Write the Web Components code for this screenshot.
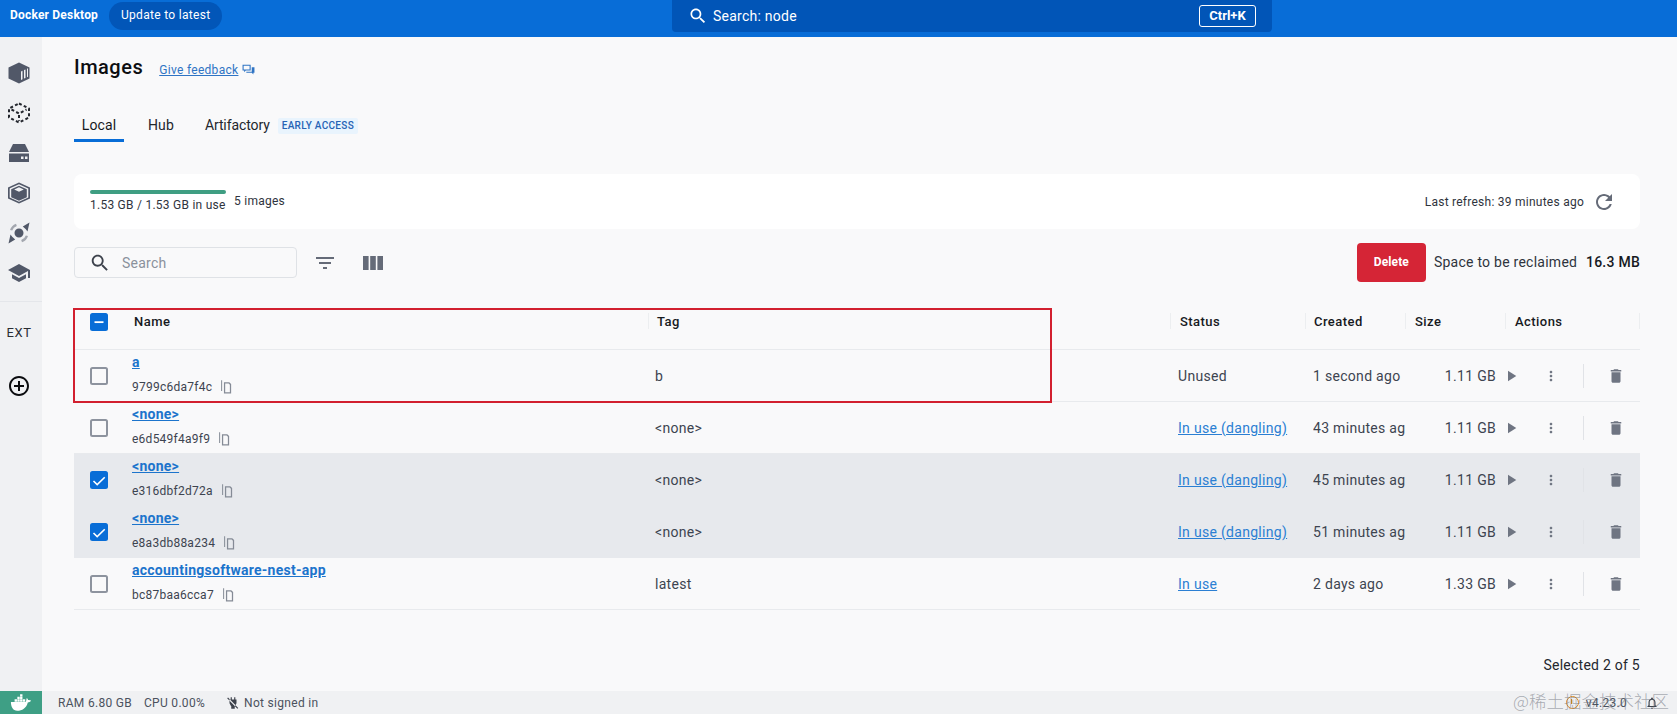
<!DOCTYPE html>
<html lang="en">
<head>
<meta charset="utf-8">
<title>Docker Desktop</title>
<style>
  html, body { margin: 0; height: 100%; }
  body {
    background: #f9f9fa;
    color: #17191e;
    font-family: Roboto, "Liberation Sans", sans-serif;
    overflow: hidden;
  }
  dd-app { height: 714px; }
</style>
</head>
<body>
<dd-app></dd-app>
<script>
const PATHS = {
  search: 'M15.5 14h-.79l-.28-.27C15.41 12.59 16 11.11 16 9.5 16 5.91 13.09 3 9.5 3S3 5.91 3 9.5 5.91 16 9.5 16c1.61 0 3.09-.59 4.23-1.57l.27.28v.79l5 4.99L20.49 19l-4.99-5zm-6 0C7.01 14 5 11.99 5 9.5S7.01 5 9.5 5 14 7.01 14 9.5 11.99 14 9.5 14z',
  filter: 'M10 18h4v-2h-4v2zM3 6v2h18V6H3zm3 7h12v-2H6v2z',
  columns: 'M2 5h5.6v14H2zM9.2 5h5.6v14H9.2zM16.4 5H22v14h-5.6z',
  refresh: 'M17.65 6.35C16.2 4.9 14.21 4 12 4c-4.42 0-7.99 3.58-7.99 8s3.57 8 7.99 8c3.73 0 6.84-2.55 7.73-6h-2.08c-.82 2.33-3.04 4-5.65 4-3.31 0-6-2.69-6-6s2.69-6 6-6c1.66 0 3.14.69 4.22 1.78L13 11h7V4l-2.35 2.35z',
  copy: 'M5 2h1.600v17H5zM9.500 5H18l3 3v15H9.500V5zm2 2v14h7.500V9l-2-2h-5.500z',
  play: 'M8 5v14l11-7z',
  more: 'M12 8c1.100 0 2-.9 2-2s-.9-2-2-2-2 .9-2 2 .9 2 2 2zm0 2c-1.100 0-2 .9-2 2s.9 2 2 2 2-.9 2-2-.9-2-2-2zm0 6c-1.100 0-2 .9-2 2s.9 2 2 2 2-.9 2-2-.9-2-2-2z',
  trash: 'M6 19c0 1.100.9 2 2 2h8c1.100 0 2-.9 2-2V7H6v12zM19 4h-3.500l-1-1h-5l-1 1H5v2h14V4z',
  school: 'M5 13.180v4L12 21l7-3.820v-4L12 17l-7-3.820zM12 3 1 9l11 6 9-4.910V17h2V9L12 3z',
  add: 'M13 7h-2v4H7v2h4v4h2v-4h4v-2h-4V7zm-1-5C6.480 2 2 6.480 2 12s4.480 10 10 10 10-4.480 10-10S17.520 2 12 2zm0 18c-4.410 0-8-3.590-8-8s3.590-8 8-8 8 3.590 8 8-3.590 8-8 8z',
  bell: 'M12 22c1.100 0 2-.9 2-2h-4c0 1.100.9 2 2 2zm6-6v-5c0-3.070-1.630-5.640-4.500-6.320V4c0-.83-.67-1.500-1.500-1.500s-1.500.67-1.500 1.500v.68C7.640 5.360 6 7.920 6 11v5l-2 2v1h16v-1l-2-2zm-2 1H8v-6c0-2.480 1.510-4.500 4-4.500s4 2.020 4 4.500v6z',
  feedback: 'M1 3h15v11H7l-3 3v-3H1zM3 5v7h11V5zM18 8h5v10h-2v3l-3-3H8v-2h10z',
  containers: 'M12 1.500 22.500 6.500v11L12 22.500 1.500 17.500v-11zM14 10.500v8.500l1.500-.7v-8.500zM17 9.100v8.500l1.500-.7V8.400zM20 7.700v8.500l1-.5V7.200z',
  volumes: 'M6 3h12l4 8H2zM2 12.500h20V21H2zM14 15.500v2.500h2.500v-2.500zM18 15.500v2.500h2.500v-2.500z',
  builds: 'M12 1.500 23 6.500v11L12 22.500 1 17.500v-11zM12 3.300 3.500 7.100 2.700 7.500v9l9.300 4.300 9.300-4.300v-9zM12 4.800 19.800 8.300v8L12 19.800 4.200 16.300v-8zM12 6.300 7.200 8.500 12 10.700l4.800-2.200z',
  devenv: 'M12 7.500a4.500 4.500 0 1 1 0 9 4.500 4.500 0 0 1 0-9zM22.500 1.500 20.500 10.500l-1.700-2.200-3-2.700zM1.500 22.500 3.500 13.500l1.700 2.200 3 2.700z',
  arcs: 'M3 9a9.500 9.500 0 0 1 6-6.300l.8 2.300A7.300 7.300 0 0 0 5.200 9.600zM21 15a9.500 9.500 0 0 1-6 6.300l-.8-2.300a7.300 7.300 0 0 0 4.600-4.600z',
  whale: 'M5 8h2.600v2.500H5zM8 8h2.600v2.500H8zM11 8h2.600v2.500H11zM8 5.200h2.600v2.400H8zM11 5.200h2.600v2.400H11zM11 2.500h2.600v2.400H11zM14 8h2.600v2.500H14zM18.300 6.500c.9.500 1.300 1.500 1.400 2.300 1-.3 2-.2 3.300.5-.9 1.700-2.300 2.100-3.600 2.100C18 17.500 13 20.500 8 20.500 3 20.500 1 16 1 11h15.800c1-.3.9-2.900 1.500-4.500z',
  plugoff: 'M8 2h2v4h4V2h2v4h2v6.500L15.500 17H15v5H9v-5h-.5L6 12.500V6h2zM3.500 2.500 21 20.500l-1.500 1.500L2 4z',
  minus: 'M6 11h12v2.400H6z',
  check: 'M9.600 16.800 5.400 12.600 3.900 14.100l5.700 5.700L20.400 9l-1.500-1.500z'
};

function icon(name, size, color) {
  return `<svg width="${size}" height="${size}" viewBox="0 0 24 24" style="display:block;flex:none" fill="${color}"><path fill-rule="evenodd" d="${PATHS[name]}"/></svg>`;
}

class DdTopbar extends HTMLElement {
  connectedCallback() {
    this.attachShadow({ mode: 'open' });
    this.shadowRoot.innerHTML = `
      <style>
        :host { display: grid; grid-template-columns: 672px 600px 1fr; height: 37px; background: #086dd7; color: #fff; }
        .left { display: flex; align-items: flex-start; }
        .logo { font-size: 12px; font-weight: 700; margin: 8px 0 0 10px; line-height: 14px; letter-spacing: .2px; width: 99px; white-space: nowrap; }
        .pill { margin-top: 2px; height: 28px; line-height: 27px; padding: 0 11.500px 0 12px; font-size: 12px; letter-spacing: .3px; background: #0256b8; border-radius: 14px; }
        .search { display: flex; align-items: center; height: 32px; background: #0155b7; border-radius: 0 0 4px 4px; padding: 0 16px; }
        .search span { margin-left: 5px; font-size: 14px; letter-spacing: .25px; }
        .key { margin-left: auto; box-sizing: border-box; width: 57px; height: 22px; line-height: 19px; border: 1px solid #fff; border-radius: 3px; text-align: center; font-size: 13px; font-weight: 700; }
      </style>
      <div class="left"><div class="logo">Docker Desktop</div><div class="pill">Update to latest</div></div>
      <div class="search">${icon('search', 20, '#fff')}<span>Search: node</span><div class="key">Ctrl+K</div></div>
    `;
  }
}

class DdSidebar extends HTMLElement {
  connectedCallback() {
    this.attachShadow({ mode: 'open' });
    const dashedCube = `<svg width="24" height="24" viewBox="0 0 24 24" style="display:block" fill="none" stroke="#23262d" stroke-width="2" stroke-dasharray="3 2.300"><path d="M12 2.500 22 7.500v9L12 21.500 2 16.500v-9zM4.500 8.500 12 12.500l7.500-4M12 14v6"/></svg>`;
    const devenv = `<svg width="24" height="24" viewBox="0 0 24 24" style="display:block"><path fill="#a3a7af" fill-rule="evenodd" d="${PATHS.arcs}"/><path fill="#515868" fill-rule="evenodd" d="${PATHS.devenv}"/></svg>`;
    const items = [
      icon('containers', 24, '#515868'),
      dashedCube,
      icon('volumes', 24, '#515868'),
      icon('builds', 24, '#515868'),
      devenv,
      icon('school', 24, '#515868')
    ];
    this.shadowRoot.innerHTML = `
      <style>
        :host { display: flex; flex-direction: column; width: 42px; flex: none; background: #f0f1f3; box-sizing: border-box; padding-top: 16px; }
        .item { width: 38px; height: 40px; display: flex; align-items: center; justify-content: center; }
        hr { width: 100%; height: 1px; margin: 8px 0 0; border: 0; background: #e4e6ea; }
        .ext { width: 38px; margin-top: 22px; text-align: center; font-size: 13px; line-height: 18px; color: #2a2d33; letter-spacing: .5px; }
        .add { width: 38px; margin-top: 32px; display: flex; justify-content: center; }
      </style>
      ${items.map(i => `<div class="item">${i}</div>`).join('')}
      <hr>
      <div class="ext">EXT</div>
      <div class="add">${icon('add', 24, '#0b0c0f')}</div>
    `;
  }
}

class DdStatusbar extends HTMLElement {
  connectedCallback() {
    this.attachShadow({ mode: 'open' });
    this.shadowRoot.innerHTML = `
      <style>
        :host { display: flex; align-items: center; height: 23px; background: #f0f1f3; color: #4b525e; font-size: 12px; letter-spacing: .3px; position: relative; }
        .whale { width: 42px; height: 23px; background: #3e9f85; display: flex; align-items: center; justify-content: center; }
        .ram { margin-left: 16px; }
        .cpu { margin-left: 12px; }
        .plug { margin-left: 21px; margin-right: 4px; }
        .right { margin-left: auto; display: flex; align-items: center; margin-right: 18px; }
        .warn { box-sizing: border-box; width: 13px; height: 13px; border: 1.500px solid #e08a1e; border-radius: 50%; position: relative; margin-right: 7px; }
        .warn::after { content: ""; position: absolute; left: 4px; top: 1.500px; width: 1.500px; height: 5px; background: #e08a1e; }
        .bell { margin-left: 18px; }
        .mark {
          position: absolute; right: 8px; top: -3px; line-height: 25px; font-size: 17.500px; letter-spacing: 0;
          color: rgba(105, 110, 120, .55); white-space: nowrap;
          font-family: "Noto Sans CJK SC", "Liberation Sans", sans-serif; font-weight: 300;
        }
      </style>
      <div class="whale">${icon('whale', 22, '#fff')}</div>
      <span class="ram">RAM 6.80 GB</span>
      <span class="cpu">CPU 0.00%</span>
      <span class="plug">${icon('plugoff', 14, '#3d424c')}</span>
      <span>Not signed in</span>
      <div class="right"><span class="warn"></span><span>v4.23.0</span><span class="bell">${icon('bell', 14, '#3d424c')}</span></div>
      <div class="mark">@稀土掘金技术社区</div>
    `;
  }
}

class DdCheckbox extends HTMLElement {
  connectedCallback() {
    this.attachShadow({ mode: 'open' });
    const state = this.getAttribute('state');
    const glyph = state === 'checked' ? icon('check', 18, '#fff') : state === 'mixed' ? icon('minus', 18, '#fff') : '';
    this.shadowRoot.innerHTML = `
      <style>
        :host { display: block; box-sizing: border-box; width: 18px; height: 18px; border-radius: 2.500px; }
        :host([state="none"]) { border: 2px solid #8d939e; }
        :host([state="checked"]), :host([state="mixed"]) { background: #086dd7; }
      </style>
      ${glyph}
    `;
  }
}

class DdImageRow extends HTMLElement {
  connectedCallback() {
    this.attachShadow({ mode: 'open' });
    const a = n => this.getAttribute(n) || '';
    const esc = s => s.replace(/&/g, '&amp;').replace(/</g, '&lt;');
    const status = a('link') ? `<a>${a('status')}</a>` : a('status');
    this.shadowRoot.innerHTML = `
      <style>
        :host {
          display: grid; grid-template-columns: 58px 523px 523px 135px 92px 91px 144px;
          height: 52px; box-sizing: border-box; border-bottom: 1px solid #e8eaed;
          align-items: center; font-size: 14px; letter-spacing: .3px; color: #3d4450;
        }
        :host([selected]) { background: #e7e9ed; border-bottom-color: #e7e9ed; }
        .check { padding-left: 16px; }
        .name { display: flex; flex-direction: column; align-self: start; }
        .title { margin-top: 2px; line-height: 20px; height: 20px; font-weight: 700; letter-spacing: .26px; color: #1c74cc; text-decoration: underline; }
        .hash { display: flex; align-items: center; margin-top: 7px; font-size: 12px; line-height: 16px; letter-spacing: .25px; }
        .hash svg { margin-left: 6px; margin-top: -2px; }
        a { color: #2b7fd3; text-decoration: underline; }
        .created { overflow: hidden; white-space: nowrap; }
        .size { text-align: right; }
        .actions { display: flex; align-items: center; padding-left: 6px; }
        .kebab { margin-left: 23px; }
        .sep { width: 1px; height: 24px; margin: 0 23px 0 24px; background: #e1e3e7; }
      </style>
      <div class="check"><dd-checkbox state="${this.hasAttribute('selected') ? 'checked' : 'none'}"></dd-checkbox></div>
      <div class="name">
        <div class="title">${esc(a('name'))}</div>
        <div class="hash">${a('hash')}${icon('copy', 15, '#858b96')}</div>
      </div>
      <div>${esc(a('tag'))}</div>
      <div>${status}</div>
      <div class="created">${a('created')}</div>
      <div class="size">${a('size')}</div>
      <div class="actions">
        ${icon('play', 18, '#6f7582')}
        <span class="kebab">${icon('more', 16, '#6f7582')}</span>
        <span class="sep"></span>
        ${icon('trash', 18, '#6f7582')}
      </div>
    `;
  }
}

class DdImageTable extends HTMLElement {
  connectedCallback() {
    this.attachShadow({ mode: 'open' });
    this.shadowRoot.innerHTML = `
      <style>
        :host { display: block; position: relative; }
        .head {
          display: grid; grid-template-columns: 60px 514px 522px 135px 100px 100px 135px;
          height: 50px; box-sizing: border-box; border-bottom: 1px solid #e8eaed;
          font-size: 13px; font-weight: 500; letter-spacing: .45px; color: #17191e;
          padding-top: 13px;
        }
        .head > div { height: 16px; line-height: 18px; }
        .head .c { border-left: 1px solid #eceef0; padding-left: 9px; }
        .head .c:nth-child(3) { padding-left: 8px; }
        .head .c:nth-child(5) { padding-left: 8px; }
        .head .c:last-child { border-right: 1px solid #eceef0; }
        .head .box { padding-left: 16px; line-height: 0; }
        .mark { position: absolute; left: -1px; top: 8px; width: 979px; height: 95px; box-sizing: border-box; border: 2px solid #d2202f; }
      </style>
      <div class="head">
        <div class="box"><dd-checkbox state="mixed"></dd-checkbox></div>
        <div>Name</div>
        <div class="c">Tag</div>
        <div class="c">Status</div>
        <div class="c">Created</div>
        <div class="c">Size</div>
        <div class="c">Actions</div>
      </div>
      <slot></slot>
      <div class="mark"></div>
    `;
  }
}

class DdImagesView extends HTMLElement {
  connectedCallback() {
    this.attachShadow({ mode: 'open' });
    this.shadowRoot.innerHTML = `
      <style>
        :host { display: flex; flex-direction: column; flex: 1; min-width: 0; box-sizing: border-box; padding: 16px 37px 0 32px; }
        .title { display: flex; align-items: center; height: 28px; }
        h1 { margin: 0; font-size: 20px; font-weight: 500; color: #0d0e11; letter-spacing: .5px; }
        .feedback { margin-left: 16px; margin-top: 5px; font-size: 12px; letter-spacing: .3px; color: #2f74c4; text-decoration: underline; }
        .title svg { margin: 5px 0 0 4px; }
        .tabs { display: flex; margin-top: 27px; height: 34px; font-size: 14px; letter-spacing: .1px; color: #23262d; }
        .tab { box-sizing: border-box; padding: 8px 8px 0; line-height: 18px; }
        .tab.on { width: 50px; border-bottom: 3px solid #086dd7; color: #17191e; text-align: center; padding: 8px 0 0; }
        .hub { margin-left: 16px; }
        .art { margin-left: 15px; letter-spacing: -.1px; }
        .chip { margin: 10px 0 0 0; height: 16px; line-height: 16px; padding: 0 4px; background: #e9f4fd; border-radius: 2px; font-size: 10px; font-weight: 500; letter-spacing: .3px; color: #2663b5; white-space: nowrap; }
        .card { display: flex; height: 55px; margin-top: 32px; box-sizing: border-box; padding: 16px 24px 0 16px; background: #fff; border-radius: 8px; font-size: 12px; letter-spacing: .25px; color: #2f343d; }
        .usage { width: 136px; }
        .bar { height: 4px; background: #3f9e82; border-radius: 2px; }
        .used { margin-top: 4px; line-height: 14px; white-space: nowrap; }
        .count { margin: 4px 0 0 8px; line-height: 14px; }
        .refresh { margin-left: auto; display: flex; align-items: flex-start; }
        .refresh span { margin-top: 5px; line-height: 14px; }
        .refresh svg { margin: 0 0 0 8px; }
        .tools { display: flex; align-items: center; margin-top: 14px; height: 39px; }
        .field { display: flex; align-items: center; box-sizing: border-box; width: 223px; height: 31px; border: 1px solid #dfe2e6; border-radius: 4px; padding-left: 14px; font-size: 14px; letter-spacing: .25px; color: #8a919c; }
        .field span { margin-left: 11px; }
        .filter { margin-left: 16px; }
        .cols { margin-left: 24px; }
        .del { margin-left: auto; box-sizing: border-box; width: 69px; height: 39px; line-height: 39px; text-align: center; background: #d52536; border-radius: 4px; color: #fff; font-size: 12px; font-weight: 700; letter-spacing: .1px; }
        .space { margin-left: 8px; font-size: 14px; letter-spacing: .25px; color: #2f343d; line-height: 16px; margin-bottom: 2px; }
        .space b { margin-left: 5px; font-weight: 500; color: #17191e; }
        .tbl { margin-top: 18px; }
        .foot { margin-top: 46px; text-align: right; font-size: 14px; letter-spacing: .25px; line-height: 18px; color: #23262d; }
      </style>
      <div class="title">
        <h1>Images</h1>
        <span class="feedback">Give feedback</span>
        ${icon('feedback', 13, '#2f74c4')}
      </div>
      <div class="tabs">
        <div class="tab on">Local</div>
        <div class="tab hub">Hub</div>
        <div class="tab art">Artifactory</div>
        <div class="chip">EARLY ACCESS</div>
      </div>
      <div class="card">
        <div class="usage"><div class="bar"></div><div class="used">1.53 GB / 1.53 GB in use</div></div>
        <div class="count">5 images</div>
        <div class="refresh"><span>Last refresh: 39 minutes ago</span>${icon('refresh', 24, '#656b78')}</div>
      </div>
      <div class="tools">
        <div class="field">${icon('search', 22, '#3d424c')}<span>Search</span></div>
        <span class="filter">${icon('filter', 24, '#656b78')}</span>
        <span class="cols">${icon('columns', 24, '#656b78')}</span>
        <div class="del">Delete</div>
        <div class="space">Space to be reclaimed <b>16.3 MB</b></div>
      </div>
      <div class="tbl"><slot></slot></div>
      <div class="foot">Selected 2 of 5</div>
    `;
  }
}

class DdApp extends HTMLElement {
  connectedCallback() {
    this.attachShadow({ mode: 'open' });
    this.shadowRoot.innerHTML = `
      <style>
        :host { display: flex; flex-direction: column; height: 714px; }
        .mid { display: flex; flex: 1; min-height: 0; }
      </style>
      <dd-topbar></dd-topbar>
      <div class="mid">
        <dd-sidebar></dd-sidebar>
        <dd-images-view>
          <dd-image-table>
            <dd-image-row name="a" hash="9799c6da7f4c" tag="b" status="Unused" created="1 second ago" size="1.11 GB"></dd-image-row>
            <dd-image-row name="<none>" hash="e6d549f4a9f9" tag="<none>" status="In use (dangling)" link="1" created="43 minutes ago" size="1.11 GB"></dd-image-row>
            <dd-image-row selected name="<none>" hash="e316dbf2d72a" tag="<none>" status="In use (dangling)" link="1" created="45 minutes ago" size="1.11 GB"></dd-image-row>
            <dd-image-row selected name="<none>" hash="e8a3db88a234" tag="<none>" status="In use (dangling)" link="1" created="51 minutes ago" size="1.11 GB"></dd-image-row>
            <dd-image-row name="accountingsoftware-nest-app" hash="bc87baa6cca7" tag="latest" status="In use" link="1" created="2 days ago" size="1.33 GB"></dd-image-row>
          </dd-image-table>
        </dd-images-view>
      </div>
      <dd-statusbar></dd-statusbar>
    `;
  }
}

customElements.define('dd-checkbox', DdCheckbox);
customElements.define('dd-image-row', DdImageRow);
customElements.define('dd-image-table', DdImageTable);
customElements.define('dd-images-view', DdImagesView);
customElements.define('dd-topbar', DdTopbar);
customElements.define('dd-sidebar', DdSidebar);
customElements.define('dd-statusbar', DdStatusbar);
customElements.define('dd-app', DdApp);
</script>
</body>
</html>
